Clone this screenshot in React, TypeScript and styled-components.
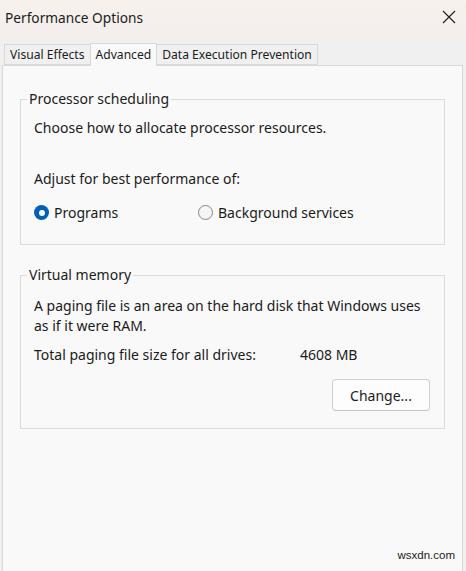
import React from "react";
import styled, { createGlobalStyle } from "styled-components";

const GlobalStyle = createGlobalStyle`
  html, body {
    margin: 0;
    padding: 0;
    background: #f9f9f9;
  }
  * {
    box-sizing: border-box;
  }
`;

const Window = styled.div`
  position: relative;
  width: 466px;
  height: 571px;
  display: flex;
  flex-direction: column;
  font-family: "Noto Sans", "Open Sans", sans-serif;
  color: #1b1b1b;
  background: #f0f0f0;
  overflow: hidden;
`;

const TitleBar = styled.div`
  height: 34px;
  display: flex;
  align-items: center;
  justify-content: space-between;
  padding: 0 9px 0 5px;
  background: linear-gradient(#f8f1ec, #f3efed);
  font-size: 13.7px;
`;

const CloseButton = styled.div`
  width: 16px;
  height: 16px;
  display: flex;
  align-items: center;
  justify-content: center;
`;

const TabStrip = styled.div`
  display: flex;
  align-items: flex-end;
  height: 31px;
  padding-left: 4px;
  background: linear-gradient(#f3efed, #f0f0f0 40%);
`;

const Tab = styled.div<{ $active?: boolean }>`
  height: ${(p) => (p.$active ? "23px" : "21px")};
  padding: 0 5px;
  margin-bottom: ${(p) => (p.$active ? "-1px" : "0")};
  display: flex;
  align-items: ${(p) => (p.$active ? "flex-start" : "center")};
  padding-top: ${(p) => (p.$active ? "2px" : "0")};
  font-size: 12.1px;
  background: ${(p) => (p.$active ? "#f9f9f9" : "#f0f0f0")};
  border: 1px solid #d9d9d9;
  border-bottom: ${(p) => (p.$active ? "none" : "1px solid #d9d9d9")};
  margin-left: ${(p) => (p.$active ? "-1px" : "0")};
  margin-right: ${(p) => (p.$active ? "-1px" : "0")};
  position: relative;
`;

const Panel = styled.div`
  flex: 1;
  margin: 0 3px 0 2px;
  border: 1px solid #d9d9d9;
  border-bottom: none;
  background: #f9f9f9;
  padding: 23px 17px 0 17px;
  display: flex;
  flex-direction: column;
  gap: 20px;
`;

const Group = styled.fieldset`
  margin: 0;
  border: 1px solid #dadada;
  padding: 0 13px 0 13px;
  display: flex;
  flex-direction: column;
`;

const Legend = styled.legend`
  font-size: 14px;
  padding: 0 2px;
  margin-left: -7px;
  line-height: 20px;
`;

const Text = styled.div<{ $top?: number }>`
  font-size: 14px;
  line-height: 20px;
  white-space: nowrap;
  margin-top: ${(p) => p.$top ?? 0}px;
`;

const RadioRow = styled.div`
  display: flex;
  align-items: center;
  margin-top: 14px;
  margin-bottom: 22px;
`;

const RadioOption = styled.label<{ $width?: number }>`
  display: flex;
  align-items: center;
  gap: 5px;
  font-size: 14px;
  width: ${(p) => (p.$width ? `${p.$width}px` : "auto")};
`;

const RadioDot = styled.span<{ $checked?: boolean }>`
  width: 15px;
  height: 15px;
  border-radius: 50%;
  flex-shrink: 0;
  background: ${(p) => (p.$checked ? "#005fb8" : "#f5f5f5")};
  border: ${(p) => (p.$checked ? "none" : "1px solid #858585")};
  display: flex;
  align-items: center;
  justify-content: center;
  &::after {
    content: "";
    display: ${(p) => (p.$checked ? "block" : "none")};
    width: 6px;
    height: 6px;
    border-radius: 50%;
    background: #ffffff;
  }
`;

const SizeRow = styled.div`
  display: grid;
  grid-template-columns: 266px auto;
  font-size: 14px;
  line-height: 20px;
  margin-top: 9px;
`;

const ButtonRow = styled.div`
  display: flex;
  justify-content: flex-end;
  margin-top: 14px;
  margin-bottom: 17px;
  padding-right: 1px;
`;

const Button = styled.button`
  width: 98px;
  height: 32px;
  border: 1px solid #d0d0d0;
  border-bottom-color: #c4c4c4;
  border-radius: 4px;
  background: #fdfdfd;
  font-family: inherit;
  font-size: 14px;
  color: #1b1b1b;
  padding: 0;
`;

const Watermark = styled.div`
  position: absolute;
  right: 11px;
  bottom: 10px;
  font-family: "Liberation Sans", Arial, sans-serif;
  font-size: 11.5px;
  color: #1a1a1a;
`;

export default function App() {
  return (
    <>
      <GlobalStyle />
      <Window>
        <TitleBar>
          <span>Performance Options</span>
          <CloseButton>
            <svg width="14" height="14" viewBox="0 0 14 14">
              <path
                d="M1 1 L13 13 M13 1 L1 13"
                stroke="#1b1b1b"
                strokeWidth="1.1"
              />
            </svg>
          </CloseButton>
        </TitleBar>
        <TabStrip>
          <Tab>Visual Effects</Tab>
          <Tab $active>Advanced</Tab>
          <Tab>Data Execution Prevention</Tab>
        </TabStrip>
        <Panel>
          <Group>
            <Legend>Processor scheduling</Legend>
            <Text $top={9}>Choose how to allocate processor resources.</Text>
            <Text $top={31}>Adjust for best performance of:</Text>
            <RadioRow>
              <RadioOption $width={164}>
                <RadioDot $checked />
                Programs
              </RadioOption>
              <RadioOption>
                <RadioDot />
                Background services
              </RadioOption>
            </RadioRow>
          </Group>
          <Group>
            <Legend>Virtual memory</Legend>
            <Text $top={11}>
              A paging file is an area on the hard disk that Windows uses
              <br />
              as if it were RAM.
            </Text>
            <SizeRow>
              <span>Total paging file size for all drives:</span>
              <span>4608 MB</span>
            </SizeRow>
            <ButtonRow>
              <Button>Change...</Button>
            </ButtonRow>
          </Group>
        </Panel>
        <Watermark>wsxdn.com</Watermark>
      </Window>
    </>
  );
}
